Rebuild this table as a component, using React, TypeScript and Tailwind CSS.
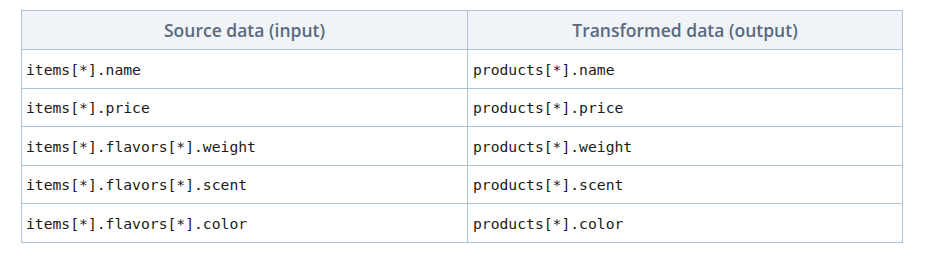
const rows = [
  ['items[*].name', 'products[*].name'],
  ['items[*].price', 'products[*].price'],
  ['items[*].flavors[*].weight', 'products[*].weight'],
  ['items[*].flavors[*].scent', 'products[*].scent'],
  ['items[*].flavors[*].color', 'products[*].color'],
]

export default function App() {
  return (
    <div className="w-[928px] h-[261px] bg-white pt-[10px] pl-[21px]">
      <table className="w-[882px] border-collapse table-fixed">
        <colgroup>
          <col className="w-[446px]" />
          <col />
        </colgroup>
        <thead>
          <tr className="h-[39px] bg-[#f0f4f9]">
            {['Source data (input)', 'Transformed data (output)'].map(h => (
              <th
                key={h}
                className="border border-[#adc2d6] px-[5px] text-center font-semibold text-[17.5px] text-[#5a6a7e] font-['Open_Sans',sans-serif]"
              >
                {h}
              </th>
            ))}
          </tr>
        </thead>
        <tbody>
          {rows.map(([src, out]) => (
            <tr key={src} className="h-[38.5px]">
              <td className="border border-[#adc2d6] px-[4px] pt-[2px] text-[14.7px] text-[#1a1a1a] font-['DejaVu_Sans_Mono',monospace]">
                {src}
              </td>
              <td className="border border-[#adc2d6] px-[5px] pt-[2px] text-[14.7px] text-[#1a1a1a] font-['DejaVu_Sans_Mono',monospace]">
                {out}
              </td>
            </tr>
          ))}
        </tbody>
      </table>
    </div>
  )
}
